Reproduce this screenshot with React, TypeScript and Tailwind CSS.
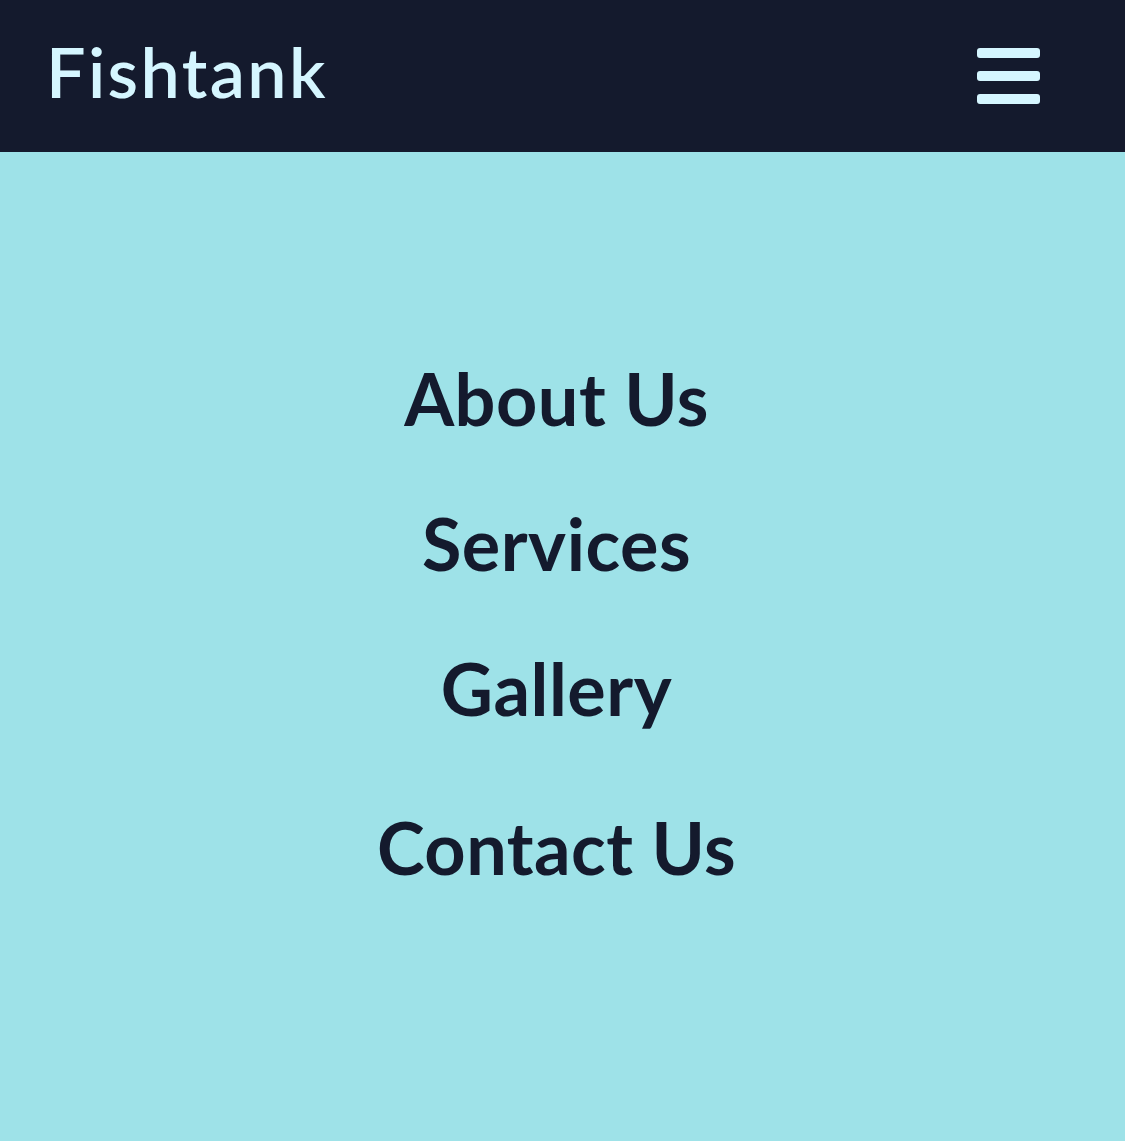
const links = ["About Us", "Services", "Gallery", "Contact Us"];

export default function App() {
  return (
    <div className="min-h-[1141px] bg-[#9ee2e8] font-['Lato',sans-serif]">
      <header className="h-[152px] bg-[#141a2d] flex items-center justify-between pl-[46px] pr-[85px]">
        <span className="mb-[10px] text-[70px] font-semibold text-[#d5f6ff] leading-none tracking-[2.4px]">
          Fishtank
        </span>
        <button className="flex flex-col gap-[13px] w-[63px]" aria-label="Menu">
          <span className="block h-[10px] rounded-[3px] bg-[#d5f6ff]" />
          <span className="block h-[10px] rounded-[3px] bg-[#d5f6ff]" />
          <span className="block h-[10px] rounded-[3px] bg-[#d5f6ff]" />
        </button>
      </header>

      <nav className="flex flex-col items-center pt-[174px] pr-[12px] text-[#141a2d]">
        {links.map((link, i) => (
          <a
            key={link}
            href="#"
            className={`text-[72px] font-bold leading-[145px] tracking-[0.5px] ${
              i === 3 ? "mt-[14px]" : ""
            }`}
          >
            {link}
          </a>
        ))}
      </nav>
    </div>
  );
}
